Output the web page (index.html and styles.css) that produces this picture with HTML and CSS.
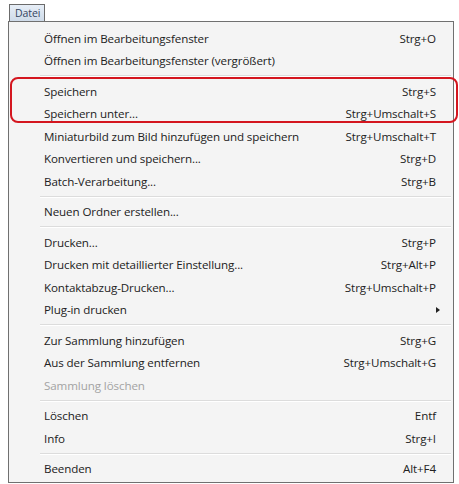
FILE: index.html
```html
<!DOCTYPE html>
<html lang="de">
<head>
<meta charset="utf-8">
<title>Datei</title>
<link rel="stylesheet" href="styles.css">
</head>
<body>
<div class="screen">
  <div class="menubar"><span class="tab">Datei</span></div>
  <div class="menu">
    <ul class="items">
      <li class="item"><span>Öffnen im Bearbeitungsfenster</span><span class="key">Strg+O</span></li>
      <li class="item"><span>Öffnen im Bearbeitungsfenster (vergrößert)</span><span class="key"></span></li>
      <li class="sep"></li>
      <li class="item"><span>Speichern</span><span class="key">Strg+S</span></li>
      <li class="item"><span>Speichern unter...</span><span class="key">Strg+Umschalt+S</span></li>
      <li class="item"><span>Miniaturbild zum Bild hinzufügen und speichern</span><span class="key">Strg+Umschalt+T</span></li>
      <li class="item"><span>Konvertieren und speichern...</span><span class="key">Strg+D</span></li>
      <li class="item"><span>Batch-Verarbeitung...</span><span class="key">Strg+B</span></li>
      <li class="sep"></li>
      <li class="item"><span>Neuen Ordner erstellen...</span><span class="key"></span></li>
      <li class="sep"></li>
      <li class="item"><span>Drucken...</span><span class="key">Strg+P</span></li>
      <li class="item"><span>Drucken mit detaillierter Einstellung...</span><span class="key">Strg+Alt+P</span></li>
      <li class="item"><span>Kontaktabzug-Drucken...</span><span class="key">Strg+Umschalt+P</span></li>
      <li class="item"><span>Plug-in drucken</span><span class="key"><span class="arrow"></span></span></li>
      <li class="sep"></li>
      <li class="item"><span>Zur Sammlung hinzufügen</span><span class="key">Strg+G</span></li>
      <li class="item"><span>Aus der Sammlung entfernen</span><span class="key">Strg+Umschalt+G</span></li>
      <li class="item disabled"><span>Sammlung löschen</span><span class="key"></span></li>
      <li class="sep"></li>
      <li class="item"><span>Löschen</span><span class="key">Entf</span></li>
      <li class="item"><span>Info</span><span class="key">Strg+I</span></li>
      <li class="sep"></li>
      <li class="item"><span>Beenden</span><span class="key">Alt+F4</span></li>
    </ul>
    <div class="mark"></div>
  </div>
</div>
</body>
</html>
```
FILE: styles.css
```css
html, body {
  margin: 0;
  padding: 0;
  background: #ffffff;
}

.screen {
  width: 459px;
  height: 484px;
  font-family: "Open Sans", "Noto Sans", sans-serif;
  font-size: 11.6px;
  letter-spacing: -0.1px;
  color: #222222;
}

.menubar {
  height: 21px;
  padding: 4px 0 0 9px;
  box-sizing: border-box;
  display: flex;
  align-items: flex-end;
}

.tab {
  display: block;
  height: 17px;
  line-height: 16px;
  padding: 0 4px 0 5px;
  border: 1px solid #6b6b6b;
  border-bottom: none;
  background: linear-gradient(#e7eef7, #cfdbe9);
  color: #34445f;
  font-size: 10.5px;
  box-sizing: border-box;
}

.menu {
  position: relative;
  margin-left: 8px;
  width: 446px;
  border: 1px solid #707070;
  background: #f4f4f4;
  box-sizing: border-box;
  padding: 5px 0 2px;
}

.items {
  list-style: none;
  margin: 0;
  padding: 0;
}

.item {
  display: flex;
  justify-content: space-between;
  align-items: center;
  height: 22.5px;
  padding: 0 17px 0 35px;
}

.key {
  display: flex;
  align-items: center;
}

.disabled {
  color: #a3a3a3;
}

.arrow {
  width: 0;
  height: 0;
  margin-right: -7px;
  border-top: 3.5px solid transparent;
  border-bottom: 3.5px solid transparent;
  border-left: 4px solid #222;
}

.sep {
  height: 8px;
  margin-left: 31px;
  margin-right: 2px;
  display: flex;
  flex-direction: column;
  justify-content: center;
}

.sep::before {
  content: "";
  display: block;
  height: 1px;
  background: #dcdcdc;
  border-bottom: 1px solid #ffffff;
}

/* red outline drawn around the two save entries */
.mark {
  position: absolute;
  left: 1px;
  top: 55px;
  width: 448px;
  height: 46px;
  border: 2.5px solid #d4161f;
  border-radius: 8px;
  box-sizing: border-box;
  pointer-events: none;
}
```
